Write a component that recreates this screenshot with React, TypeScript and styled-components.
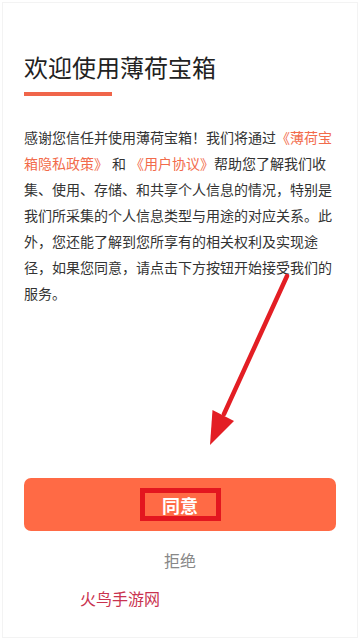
import React from "react";
import styled, { createGlobalStyle } from "styled-components";

const Global = createGlobalStyle`
  html, body { margin: 0; padding: 0; background: #fff; }
  body { font-family: "Noto Sans CJK SC", "Noto Sans", sans-serif; }
  * { box-sizing: border-box; }
`;

const Frame = styled.div`
  position: relative;
  width: 360px;
  height: 640px;
  padding: 2px;
  background: #fff;
`;

const Page = styled.div`
  height: 100%;
  border: 1px solid #f3f3f3;
  display: flex;
  flex-direction: column;
  padding: 47px 21px 28px 21px;
`;

const Title = styled.h1`
  margin: 0;
  font-size: 24px;
  line-height: 34px;
  font-weight: 400;
  color: #222;
  letter-spacing: 0;
`;

const Underline = styled.div`
  width: 88px;
  height: 4px;
  background: #f0654a;
  margin-top: 8px;
`;

const Body = styled.p`
  margin: 28px 0 0 0;
  font-size: 14px;
  line-height: 26px;
  color: #333;
  width: 312px;
`;

const Link = styled.span`
  color: #f26b4b;
`;

const Conj = styled.span`
  margin: 0 4px;
`;

const Footer = styled.div`
  margin-top: auto;
  display: flex;
  flex-direction: column;
  align-items: center;
`;

const AgreeButton = styled.button`
  width: 312px;
  height: 53px;
  border: none;
  border-radius: 7px;
  background: #ff6a45;
  display: flex;
  align-items: center;
  justify-content: center;
  padding: 0;
  font-family: inherit;
`;

const Highlight = styled.span`
  display: flex;
  align-items: center;
  justify-content: center;
  width: 81px;
  height: 33px;
  border: 5px solid #e3161f;
  color: #fff;
  font-size: 18px;
  font-weight: 700;
  line-height: 1;
`;

const Reject = styled.div`
  margin-top: 17px;
  font-size: 16px;
  line-height: 24px;
  color: #888;
`;

const Watermark = styled.div`
  align-self: flex-start;
  margin: 15px 0 0 56px;
  font-size: 16px;
  line-height: 22px;
  color: #c9334f;
  font-family: "Noto Sans CJK SC", serif;
  font-weight: 400;
`;

const ArrowLayer = styled.svg`
  position: absolute;
  left: 0;
  top: 0;
  pointer-events: none;
`;

export default function App() {
  return (
    <>
      <Global />
      <Frame>
        <Page>
          <Title>欢迎使用薄荷宝箱</Title>
          <Underline />
          <Body>
            感谢您信任并使用薄荷宝箱！我们将通过<Link>《薄荷宝箱隐私政策》</Link>
            <Conj>和</Conj>
            <Link>《用户协议》</Link>帮助您了解我们收集、使用、存储、和共享个人信息的情况，特别是我们所采集的个人信息类型与用途的对应关系。此外，您还能了解到您所享有的相关权利及实现途径，如果您同意，请点击下方按钮开始接受我们的服务。
          </Body>
          <Footer>
            <AgreeButton>
              <Highlight>同意</Highlight>
            </AgreeButton>
            <Reject>拒绝</Reject>
            <Watermark>火鸟手游网</Watermark>
          </Footer>
        </Page>
        <ArrowLayer width="360" height="640" viewBox="0 0 360 640">
          <line x1="287" y1="276" x2="224" y2="414" stroke="#e31e24" strokeWidth="4.5" strokeLinecap="round" />
          <polygon points="210,445 212.5,410 234,421" fill="#e31e24" />
        </ArrowLayer>
      </Frame>
    </>
  );
}
